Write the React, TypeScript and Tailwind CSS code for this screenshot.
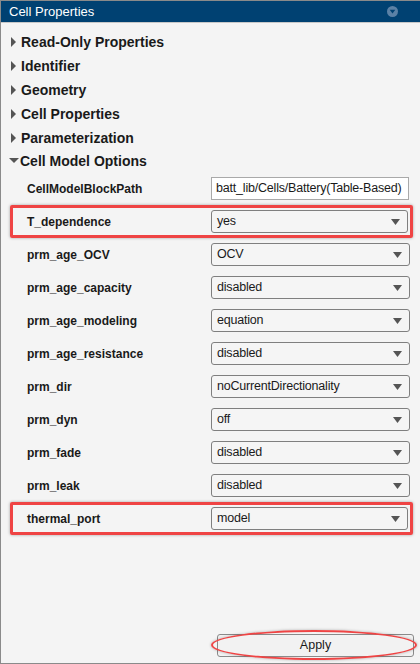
import React from 'react';

const font = { fontFamily: '"Liberation Sans", Arial, sans-serif' };

const sections = ['Read-Only Properties', 'Identifier', 'Geometry', 'Cell Properties', 'Parameterization'];

type Param = { name: string; value: string; kind: 'text' | 'select'; marked?: boolean };

const params: Param[] = [
  { name: 'CellModelBlockPath', value: 'batt_lib/Cells/Battery(Table-Based)', kind: 'text' },
  { name: 'T_dependence', value: 'yes', kind: 'select', marked: true },
  { name: 'prm_age_OCV', value: 'OCV', kind: 'select' },
  { name: 'prm_age_capacity', value: 'disabled', kind: 'select' },
  { name: 'prm_age_modeling', value: 'equation', kind: 'select' },
  { name: 'prm_age_resistance', value: 'disabled', kind: 'select' },
  { name: 'prm_dir', value: 'noCurrentDirectionality', kind: 'select' },
  { name: 'prm_dyn', value: 'off', kind: 'select' },
  { name: 'prm_fade', value: 'disabled', kind: 'select' },
  { name: 'prm_leak', value: 'disabled', kind: 'select' },
  { name: 'thermal_port', value: 'model', kind: 'select', marked: true },
];

function Caret({ open }: { open?: boolean }) {
  return open ? (
    <svg width="10" height="6" viewBox="0 0 10 6" className="shrink-0">
      <path d="M0 0 L10 0 L5 5 Z" fill="#555" />
    </svg>
  ) : (
    <svg width="6" height="10" viewBox="0 0 6 10" className="shrink-0 ml-[1px] mr-[3px]">
      <path d="M0 0 L5 5 L0 10 Z" fill="#555" />
    </svg>
  );
}

function Control({ p }: { p: Param }) {
  if (p.kind === 'text') {
    return (
      <div className="w-[198px] h-[23px] bg-white border border-[#a9a9a9] flex items-center pl-[4px] text-[12.5px] tracking-[-0.2px] text-[#1a1a1a] whitespace-nowrap overflow-hidden">
        {p.value}
      </div>
    );
  }
  return (
    <div
      className={`h-[23px] bg-[#f5f5f5] border border-[#7f7f7f] rounded-[3px] flex items-center justify-between pl-[5px] pr-[7px] text-[12.5px] tracking-[-0.2px] text-[#1a1a1a] ${
        p.marked ? 'w-[197px]' : 'w-[199px]'
      }`}
    >
      <span>{p.value}</span>
      <svg width="9" height="6" viewBox="0 0 9 6">
        <path d="M0 0 L9 0 L4.5 6 Z" fill="#555" />
      </svg>
    </div>
  );
}

export default function App() {
  return (
    <div style={font} className="w-[420px] h-[664px] flex flex-col bg-[#f4f4f4] border-t border-l border-b border-[#8a8a8a] overflow-hidden">
      <div className="h-[22px] bg-[#004172] border-b border-[#c8c8c8] flex items-center justify-between pl-[8px] pr-[22px] shrink-0">
        <span className="text-white text-[13px]">Cell Properties</span>
        <svg width="11" height="11" viewBox="0 0 11 11">
          <circle cx="5.5" cy="5.5" r="5.5" fill="#5b81a6" />
          <path d="M2.7 3.8 L8.3 3.8 L5.5 7.6 Z" fill="#004172" />
        </svg>
      </div>

      <div className="flex-1 flex flex-col pt-[7px]">
        {sections.map((s) => (
          <div key={s} className="h-[24px] flex items-center gap-[1px] pl-[9px]">
            <Caret />
            <span className="text-[14px] font-bold text-[#1a1a1a]">{s}</span>
          </div>
        ))}
        <div className="h-[22px] flex items-center gap-[1px] pl-[8px]">
          <Caret open />
          <span className="text-[14px] font-bold text-[#1a1a1a]">Cell Model Options</span>
        </div>

        <div className="flex flex-col">
          {params.map((p) => (
            <div key={p.name} className="relative h-[33px] flex items-center">
              <span className="w-[210px] pl-[26px] text-[12px] font-bold text-[#1a1a1a]">{p.name}</span>
              <Control p={p} />
              {p.marked && (
                <div className="absolute left-[9px] top-0 w-[403px] h-[33px] border-[3px] border-[#ef4444] rounded-[2px] shadow-[0_0_3px_rgba(0,0,0,0.35)]" />
              )}
            </div>
          ))}
        </div>

        <div className="mt-auto flex justify-end pr-[6px] pb-[6px]">
          <div className="relative">
            <button className="w-[197px] h-[23px] rounded-[3px] border border-[#8a8a8a] bg-[#f2f2f2] text-[12.5px] text-[#1a1a1a] flex items-center justify-center">
              Apply
            </button>
            <div className="absolute left-[-6px] top-[-4px] w-[206px] h-[30px] rounded-[50%] border-[2px] border-[#ef4444] shadow-[0_0_3px_rgba(0,0,0,0.3)]" />
          </div>
        </div>
      </div>
    </div>
  );
}
